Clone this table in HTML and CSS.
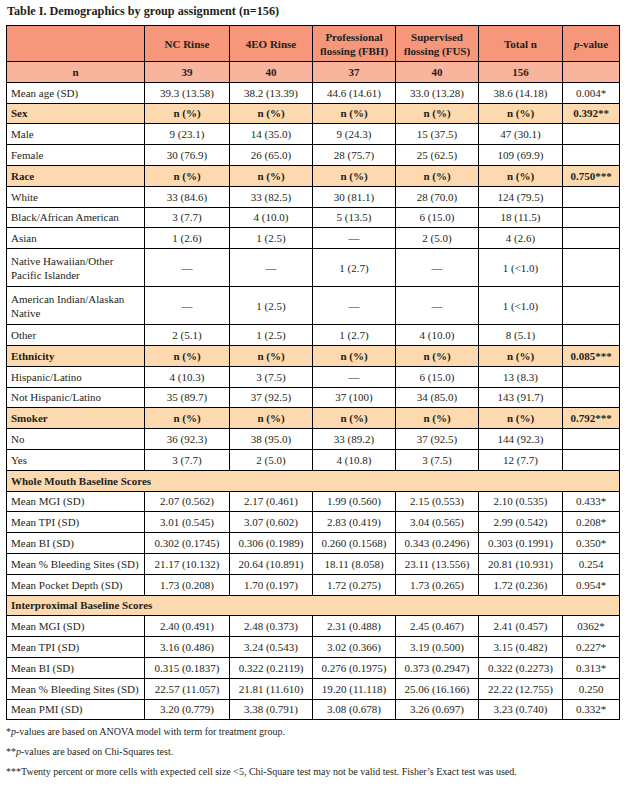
FILE: index.html
```html
<!DOCTYPE html>
<html lang="en">
<head>
<meta charset="utf-8">
<title>Table I. Demographics by group assignment</title>
<link rel="stylesheet" href="styles.css">
</head>
<body>
<div class="page">
  <h1 class="title">Table I. Demographics by group assignment (n=156)</h1>
  <table class="demo">
    <colgroup>
      <col class="c-label"><col class="c-nc"><col class="c-eo"><col class="c-fbh"><col class="c-fus"><col class="c-total"><col class="c-p">
    </colgroup>
    <thead>
      <tr class="head">
        <th></th><th>NC Rinse</th><th>4EO Rinse</th><th>Professional<br>flossing (FBH)</th><th>Supervised<br>flossing (FUS)</th><th>Total n</th><th><i>p</i>-value</th>
      </tr>
      <tr class="nrow">
        <th>n</th><th>39</th><th>40</th><th>37</th><th>40</th><th>156</th><th></th>
      </tr>
    </thead>
    <tbody>
      <tr><td>Mean age (SD)</td><td>39.3 (13.58)</td><td>38.2 (13.39)</td><td>44.6 (14.61)</td><td>33.0 (13.28)</td><td>38.6 (14.18)</td><td>0.004*</td></tr>
      <tr class="section"><td>Sex</td><td>n (%)</td><td>n (%)</td><td>n (%)</td><td>n (%)</td><td>n (%)</td><td>0.392**</td></tr>
      <tr><td>Male</td><td>9 (23.1)</td><td>14 (35.0)</td><td>9 (24.3)</td><td>15 (37.5)</td><td>47 (30.1)</td><td></td></tr>
      <tr><td>Female</td><td>30 (76.9)</td><td>26 (65.0)</td><td>28 (75.7)</td><td>25 (62.5)</td><td>109 (69.9)</td><td></td></tr>
      <tr class="section"><td>Race</td><td>n (%)</td><td>n (%)</td><td>n (%)</td><td>n (%)</td><td>n (%)</td><td>0.750***</td></tr>
      <tr><td>White</td><td>33 (84.6)</td><td>33 (82.5)</td><td>30 (81.1)</td><td>28 (70.0)</td><td>124 (79.5)</td><td></td></tr>
      <tr><td>Black/African American</td><td>3 (7.7)</td><td>4 (10.0)</td><td>5 (13.5)</td><td>6 (15.0)</td><td>18 (11.5)</td><td></td></tr>
      <tr><td>Asian</td><td>1 (2.6)</td><td>1 (2.5)</td><td>—</td><td>2 (5.0)</td><td>4 (2.6)</td><td></td></tr>
      <tr class="double"><td>Native Hawaiian/Other<br>Pacific Islander</td><td>—</td><td>—</td><td>1 (2.7)</td><td>—</td><td>1 (&lt;1.0)</td><td></td></tr>
      <tr class="double"><td>American Indian/Alaskan<br>Native</td><td>—</td><td>1 (2.5)</td><td>—</td><td>—</td><td>1 (&lt;1.0)</td><td></td></tr>
      <tr><td>Other</td><td>2 (5.1)</td><td>1 (2.5)</td><td>1 (2.7)</td><td>4 (10.0)</td><td>8 (5.1)</td><td></td></tr>
      <tr class="section"><td>Ethnicity</td><td>n (%)</td><td>n (%)</td><td>n (%)</td><td>n (%)</td><td>n (%)</td><td>0.085***</td></tr>
      <tr><td>Hispanic/Latino</td><td>4 (10.3)</td><td>3 (7.5)</td><td>—</td><td>6 (15.0)</td><td>13 (8.3)</td><td></td></tr>
      <tr><td>Not Hispanic/Latino</td><td>35 (89.7)</td><td>37 (92.5)</td><td>37 (100)</td><td>34 (85.0)</td><td>143 (91.7)</td><td></td></tr>
      <tr class="section"><td>Smoker</td><td>n (%)</td><td>n (%)</td><td>n (%)</td><td>n (%)</td><td>n (%)</td><td>0.792***</td></tr>
      <tr><td>No</td><td>36 (92.3)</td><td>38 (95.0)</td><td>33 (89.2)</td><td>37 (92.5)</td><td>144 (92.3)</td><td></td></tr>
      <tr><td>Yes</td><td>3 (7.7)</td><td>2 (5.0)</td><td>4 (10.8)</td><td>3 (7.5)</td><td>12 (7.7)</td><td></td></tr>
      <tr class="section span"><td colspan="7">Whole Mouth Baseline Scores</td></tr>
      <tr><td>Mean MGI (SD)</td><td>2.07 (0.562)</td><td>2.17 (0.461)</td><td>1.99 (0.560)</td><td>2.15 (0.553)</td><td>2.10 (0.535)</td><td>0.433*</td></tr>
      <tr><td>Mean TPI (SD)</td><td>3.01 (0.545)</td><td>3.07 (0.602)</td><td>2.83 (0.419)</td><td>3.04 (0.565)</td><td>2.99 (0.542)</td><td>0.208*</td></tr>
      <tr><td>Mean BI (SD)</td><td>0.302 (0.1745)</td><td>0.306 (0.1989)</td><td>0.260 (0.1568)</td><td>0.343 (0.2496)</td><td>0.303 (0.1991)</td><td>0.350*</td></tr>
      <tr><td>Mean % Bleeding Sites (SD)</td><td>21.17 (10.132)</td><td>20.64 (10.891)</td><td>18.11 (8.058)</td><td>23.11 (13.556)</td><td>20.81 (10.931)</td><td>0.254</td></tr>
      <tr><td>Mean Pocket Depth (SD)</td><td>1.73 (0.208)</td><td>1.70 (0.197)</td><td>1.72 (0.275)</td><td>1.73 (0.265)</td><td>1.72 (0.236)</td><td>0.954*</td></tr>
      <tr class="section span"><td colspan="7">Interproximal Baseline Scores</td></tr>
      <tr><td>Mean MGI (SD)</td><td>2.40 (0.491)</td><td>2.48 (0.373)</td><td>2.31 (0.488)</td><td>2.45 (0.467)</td><td>2.41 (0.457)</td><td>0362*</td></tr>
      <tr><td>Mean TPI (SD)</td><td>3.16 (0.486)</td><td>3.24 (0.543)</td><td>3.02 (0.366)</td><td>3.19 (0.500)</td><td>3.15 (0.482)</td><td>0.227*</td></tr>
      <tr><td>Mean BI (SD)</td><td>0.315 (0.1837)</td><td>0.322 (0.2119)</td><td>0.276 (0.1975)</td><td>0.373 (0.2947)</td><td>0.322 (0.2273)</td><td>0.313*</td></tr>
      <tr><td>Mean % Bleeding Sites (SD)</td><td>22.57 (11.057)</td><td>21.81 (11.610)</td><td>19.20 (11.118)</td><td>25.06 (16.166)</td><td>22.22 (12.755)</td><td>0.250</td></tr>
      <tr><td>Mean PMI (SD)</td><td>3.20 (0.779)</td><td>3.38 (0.791)</td><td>3.08 (0.678)</td><td>3.26 (0.697)</td><td>3.23 (0.740)</td><td>0.332*</td></tr>
    </tbody>
  </table>
  <div class="notes">
    <p>*<i>p</i>-values are based on ANOVA model with term for treatment group.</p>
    <p>**<i>p</i>-values are based on Chi-Squares test.</p>
    <p>***Twenty percent or more cells with expected cell size &lt;5, Chi-Square test may not be valid test. Fisher’s Exact test was used.</p>
  </div>
</div>
</body>
</html>
```

FILE: styles.css
```css
html, body {
  margin: 0;
  padding: 0;
  background: #ffffff;
}

body {
  color: #231f20;
  font-family: "Liberation Serif", "Times New Roman", serif;
}

.page {
  padding: 3px 0 0 6px;
}

.title {
  margin: 0 0 6px 1px;
  font-size: 12.2px;
  line-height: 16px;
  font-weight: bold;
}

.demo {
  width: 613px;
  table-layout: fixed;
  border-collapse: collapse;
  font-size: 11px;
  line-height: 14px;
}

.c-label { width: 138px; }
.c-nc { width: 85px; }
.c-eo { width: 83px; }
.c-fbh { width: 83px; }
.c-fus { width: 83px; }
.c-total { width: 84px; }
.c-p { width: 57px; }

.demo th,
.demo td {
  border: 1px solid #000;
  padding: 0 2px;
  text-align: center;
  vertical-align: middle;
  white-space: nowrap;
}

.demo td:first-child {
  text-align: left;
  padding-left: 4px;
}

.demo tr {
  height: 20.8px;
}

.demo tr.double {
  height: 38px;
}

.demo tr.head {
  height: 36px;
}

.head th {
  background: #f6967a;
  font-weight: bold;
}

.head i {
  font-style: italic;
}

.nrow th {
  background: #f9b49d;
  font-weight: bold;
}

.section td {
  background: #fdd9af;
  font-weight: bold;
}

.notes {
  margin-top: 2px;
  font-size: 10px;
  line-height: 20px;
}

.notes p {
  margin: 0;
}
```
